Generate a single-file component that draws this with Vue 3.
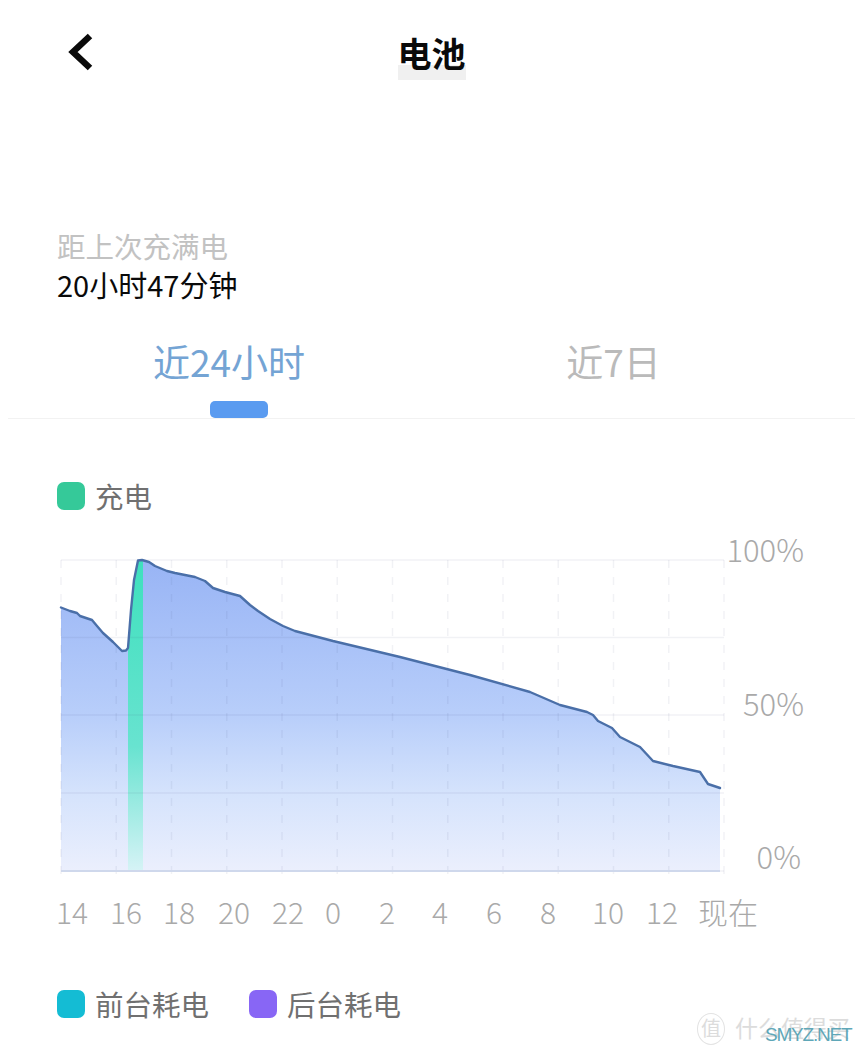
<script setup>
// 电池 usage page, chart drawn in page-like svg units (x 0 = plot svg left edge)
const curve = [
  [61,607.5],[70,611],[77,613],[80,616],[92,620],[97,626],[103,633],[113,642],[118,647],[122,651],[126,650.5],[128,648],
  [131,610],[134,580],[138,560.5],[142,560],[149,562],[155,566],[167,571],[175,573],[185,575],[195,577],[205,581],[213,588],
  [225,592],[240,596],[250,605],[258,611],[270,619],[283,626],[295,631],[333,641],[400,657],[470,675],[530,692],
  [560,705],[587,712],[593,715],[598,721],[612,728],[620,737],[640,747],[653,761],[673,766],
  [700,772],[708,784],[720,788]
];
const top = 560;
const bottom = 871;
const pad = 40; // room above the plot for the 100% label
const line = curve.map(([x, y]) => `${x},${y - top + pad}`).join(' ');
const area = `61,${bottom - top + pad} ${line} 720,${bottom - top + pad}`;
const hLines = [560, 637.5, 715, 793, 871].map((y) => y - top + pad);
const vLines = Array.from({ length: 13 }, (_, i) => 61 + i * 55.25);
const xLabels = [
  ['14', 72], ['16', 126], ['18', 179], ['20', 234], ['22', 288], ['0', 333], ['2', 387],
  ['4', 440], ['6', 494], ['8', 548], ['10', 608], ['12', 662], ['现在', 728]
];
const yLabels = [['100%', 804, pad + 2], ['50%', 804, pad + 156], ['0%', 801, pad + 309]];
</script>

<template>
  <div class="page">
    <header class="nav">
      <svg class="back" width="26" height="38" viewBox="0 0 26 38">
        <path d="M22 3 L5 19 L22 35" fill="none" stroke="#0a0a0a" stroke-width="6.5" />
      </svg>
      <h1 class="title">电池</h1>
    </header>

    <section class="since">
      <div class="since-label">距上次充满电</div>
      <div class="since-value">20小时47分钟</div>
    </section>

    <nav class="tabs">
      <div class="tab active">近24小时<span class="indicator"></span></div>
      <div class="tab">近7日</div>
    </nav>

    <div class="legend first">
      <span class="dot green"></span>
      <span>充电</span>
    </div>

    <svg class="chart" width="863" height="418" viewBox="0 0 863 418">
      <defs>
        <linearGradient id="fill" x1="0" y1="40" x2="0" y2="351" gradientUnits="userSpaceOnUse">
          <stop offset="0" stop-color="#98b4f5" />
          <stop offset="0.5" stop-color="#b8cefa" />
          <stop offset="0.75" stop-color="#d5e3fc" />
          <stop offset="1" stop-color="#ebeffd" />
        </linearGradient>
        <linearGradient id="charge" x1="0" y1="40" x2="0" y2="351" gradientUnits="userSpaceOnUse">
          <stop offset="0" stop-color="#3ee0bd" />
          <stop offset="0.6" stop-color="#68e3d0" />
          <stop offset="1" stop-color="#d6f3f6" />
        </linearGradient>
        <clipPath id="under"><polygon :points="area" /></clipPath>
      </defs>
      <polygon :points="area" fill="url(#fill)" />
      <rect x="128" y="40" width="15" height="311" fill="url(#charge)" clip-path="url(#under)" />
      <line v-for="y in hLines" :key="y" x1="61" x2="724" :y1="y" :y2="y" class="grid" />
      <line v-for="x in vLines" :key="x" :x1="x" :x2="x" y1="40" y2="358" class="grid dash" />
      <line x1="61" x2="720" y1="351" y2="351" class="base" />
      <polyline :points="line" fill="none" stroke="#4a6fa8" stroke-width="2.4" stroke-linejoin="round" stroke-linecap="round" />
      <text v-for="[t, x, y] in yLabels" :key="t" :x="x" :y="y" text-anchor="end" class="axis y">{{ t }}</text>
      <text v-for="[t, x] in xLabels" :key="t" :x="x" y="404" text-anchor="middle" class="axis">{{ t }}</text>
    </svg>

    <div class="legend second">
      <span class="dot cyan"></span>
      <span class="legend-text">前台耗电</span>
      <span class="dot purple"></span>
      <span>后台耗电</span>
    </div>

    <div class="watermark">
      <span class="wm-logo">值</span>
      <span class="wm-name">什么值得买</span>
      <span class="wm-site">SMYZ.NET</span>
    </div>
  </div>
</template>

<style scoped>
.page { position: relative; width: 863px; height: 1055px; overflow: hidden; background: #fff; font-family: "Liberation Sans", "Noto Sans CJK SC", sans-serif; }
.nav { position: relative; display: flex; justify-content: center; height: 226px; }
.back { position: absolute; left: 68px; top: 33px; }
.title { margin: 33px 0 0; height: 47px; font-size: 34px; line-height: 40px; font-weight: 700; color: #0a0a0a; font-family: "Noto Sans CJK SC", sans-serif; background: linear-gradient(to bottom, transparent 32px, #f0f0f0 32px); }
.since { padding-left: 57px; font-family: "Noto Sans CJK SC", sans-serif; line-height: 39px; }
.since-label { color: #c2c2c2; font-size: 28.5px; }
.since-value { color: #0a0a0a; font-size: 29px; }
.tabs { position: relative; display: flex; height: 115px; margin: 0 8px; border-bottom: 1px solid #f2f2f2; box-sizing: border-box; font-family: "Noto Sans CJK SC", sans-serif; font-size: 37px; }
.tab { position: relative; padding-top: 32px; line-height: 50px; color: #bababa; text-align: center; }
.tab:first-child { flex: 0 0 442px; }
.tab:last-child { flex: 0 0 321px; padding-left: 6px; box-sizing: border-box; }
.tab.active { color: #74a4d4; }
.indicator { position: absolute; left: 202px; bottom: 0; width: 58px; height: 17px; border-radius: 5px; background: #5a9bf0; }
.legend { display: flex; align-items: center; padding-left: 57px; font-family: "Noto Sans CJK SC", sans-serif; font-size: 28.5px; color: #707070; line-height: 40px; }
.legend.first { margin-top: 57px; }
.legend.second { margin-top: 46px; }
.dot { width: 28px; height: 28px; border-radius: 7px; margin-right: 10px; flex: none; }
.green { background: #35c999; }
.cyan { background: #14bcd4; }
.purple { background: #8866f5; }
.legend-text { margin-right: 40px; }
.chart { display: block; margin-top: 4px; }
.grid { stroke: rgba(60, 70, 110, 0.07); stroke-width: 1.5; }
.dash { stroke-dasharray: 8 9; stroke-width: 1.5; }
.base { stroke: #cfd8ec; stroke-width: 2; }
.axis { font-family: "Noto Sans CJK SC", sans-serif; font-size: 30px; font-weight: 300; fill: #a9a9a9; }
.axis.y { font-size: 31px; }
.watermark { position: absolute; left: 697px; top: 1012px; width: 160px; height: 36px; color: #dcdcdc; font-family: "Noto Sans CJK SC", sans-serif; }
.wm-logo { position: absolute; left: 0; top: 1px; width: 26px; height: 30px; border-radius: 50%; border: 1px solid #e3e3e3; font-size: 20px; line-height: 28px; text-align: center; }
.wm-name { position: absolute; left: 38px; top: 0; font-size: 23px; line-height: 30px; white-space: nowrap; }
.wm-site { position: absolute; left: 68px; top: 13px; font-family: "Liberation Sans", sans-serif; font-size: 19px; letter-spacing: -1.2px; line-height: 20px; color: #5fa7b8; white-space: nowrap; }
</style>

<style>
html, body { margin: 0; background: #fff; }
</style>
